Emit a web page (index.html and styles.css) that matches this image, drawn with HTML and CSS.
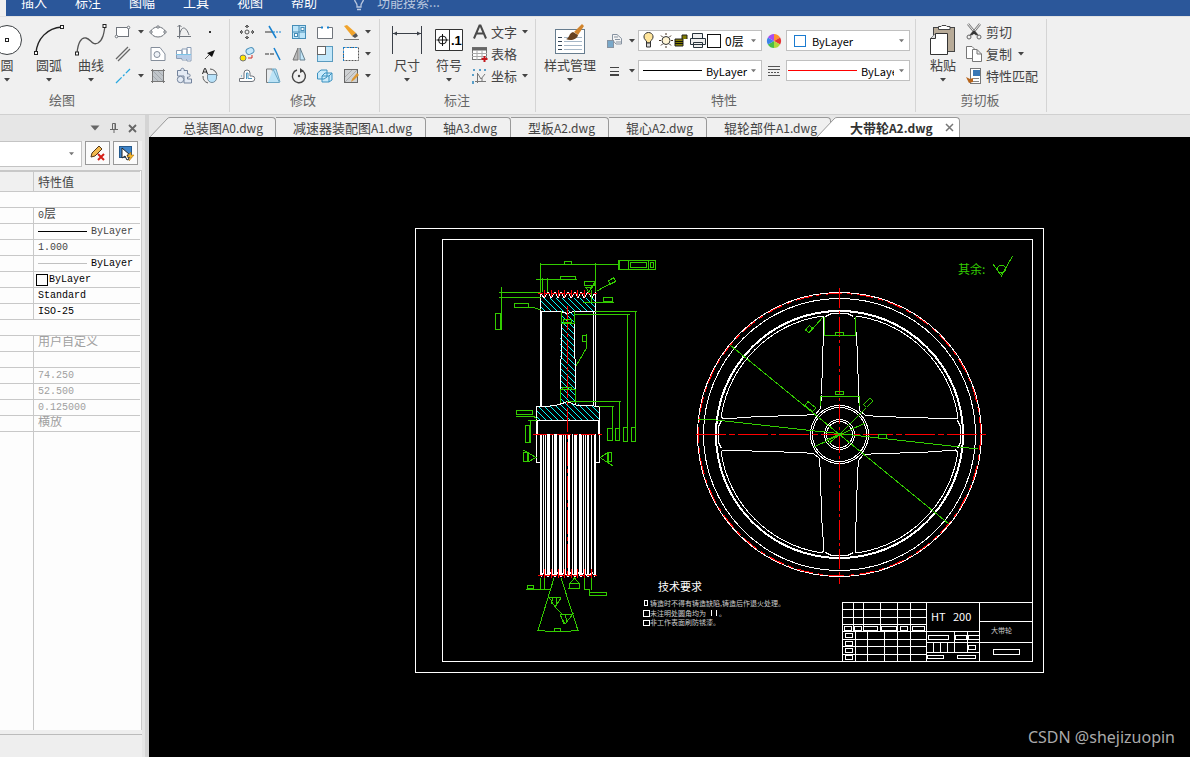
FILE: index.html
```html
<!DOCTYPE html>
<html lang="zh-CN">
<head>
<meta charset="utf-8">
<title>大带轮A2.dwg</title>
<link rel="stylesheet" href="styles.css">
</head>
<body>
<svg class="defs" aria-hidden="true">
  <symbol id="caret" viewBox="0 0 6 4"><path d="M0 0H6L3 3.5Z" fill="currentColor"/></symbol>
</svg>
<div class="app">
  <nav class="menubar">
    <a href="#">插入</a><a href="#">标注</a><a href="#">图幅</a><a href="#">工具</a><a href="#">视图</a><a href="#">帮助</a>
    <label class="search">
      <svg width="12" height="18" viewBox="0 0 12 18" fill="none" stroke="#b9c7df" stroke-width="1.3"><path d="M4 14V12C4 10 1.500 9 1.500 6A4.500 4.500 0 0 1 10.500 6C10.500 9 8 10 8 12V14ZM4 16.500H8"/></svg>
      <input type="text" placeholder="功能搜索..." aria-label="功能搜索">
    </label>
  </nav>

  <header class="ribbon">
    <section class="group group-draw">
      <div class="tools">
        <button class="big"><svg width="32" height="32"><circle cx="16" cy="16" r="14.500" fill="#fff" stroke="#3c4043"/><rect x="14.500" y="14.500" width="3" height="3" fill="#fff" stroke="#222"/></svg><span>圆</span><svg class="caret"><use href="#caret"/></svg></button>
        <button class="big"><svg width="32" height="32" fill="none" stroke="#222"><path d="M3 29C4 15 14 4 29 3" stroke-width="1.400"/><g fill="#fff"><rect x="1.500" y="27.500" width="3" height="3"/><rect x="27.500" y="1.500" width="3" height="3"/></g></svg><span>圆弧</span><svg class="caret"><use href="#caret"/></svg></button>
        <button class="big"><svg width="32" height="32" fill="none" stroke="#555"><path d="M2 29C3 19 6 13 11 14C16 15 17 22 23 19C28 16 29 9 30 2" stroke-width="1.300"/><g fill="#fff" stroke="#222"><rect x="0.500" y="28" width="3" height="3"/><rect x="28" y="0.500" width="3" height="3"/></g></svg><span>曲线</span><svg class="caret"><use href="#caret"/></svg></button>
        <div class="grid grid-draw">
          <button aria-label="矩形"><svg width="18" height="18" fill="#fff" stroke="#70757c"><rect x="2.500" y="4.500" width="12" height="9"/><circle cx="2.500" cy="13.500" r="1.300"/><circle cx="14.500" cy="4.500" r="1.300"/></svg></button>
          <button aria-label="矩形选项"><svg class="caret"><use href="#caret"/></svg></button>
          <button aria-label="椭圆"><svg width="18" height="18" fill="#fff" stroke="#70757c"><ellipse cx="9" cy="9" rx="7" ry="5"/><circle cx="9" cy="4" r="1.200"/><circle cx="2" cy="9" r="1.200"/><circle cx="16" cy="9" r="1.200"/></svg></button>
          <button aria-label="公式曲线"><svg width="18" height="18" fill="none" stroke="#70757c"><path d="M4.500 2V15.500M2 13.500H16M4.500 13C6 2 11 3 14 12M2.500 4L4.500 2L6.500 4"/></svg></button>
          <button aria-label="点"><svg width="18" height="18"><rect x="8" y="8" width="2" height="2" fill="#333"/></svg></button>
          <button aria-label="平行线"><svg width="18" height="18" stroke="#686868" stroke-width="1.300"><path d="M2 14L14 2M4 16L16 4"/></svg></button>
          <span></span>
          <button aria-label="孔"><svg width="18" height="18" fill="#fff" stroke="#858e9b"><path d="M2 2.500H11L16 9V15.500H2Z"/><circle cx="8" cy="9.500" r="3" fill="#eef2f7"/></svg></button>
          <button aria-label="轴"><svg width="18" height="18" fill="#fff" stroke="#8b9db5"><path d="M1.500 5.500H7V13.500H1.500ZM7 4H12V15H7ZM12 2.500H16V16H12Z"/><path d="M2 10H16V15H12V14H7V13H2Z" fill="#b7cde8" stroke="none"/><path d="M1 9.500H16" stroke="#7cc3e6"/></svg></button>
          <button aria-label="箭头"><svg width="18" height="18"><path d="M4 14L10 8" stroke="#555"/><path d="M14 5L6 8L11 12Z" fill="#111"/></svg></button>
          <button aria-label="中心线"><svg width="18" height="18"><path d="M2 16L16 2" stroke="#28a8e0" stroke-width="1.300" stroke-dasharray="8 2 2 2"/></svg></button>
          <button aria-label="中心线选项"><svg class="caret"><use href="#caret"/></svg></button>
          <button aria-label="填充"><svg width="18" height="18" fill="none" stroke="#777"><rect x="4" y="4" width="10" height="10" fill="#c0c5ca" stroke="none"/><path d="M3.500 2V16M14.500 2V16M2 3.500H16M2 14.500H16"/><path d="M4 9L9 14M4 4L14 14M9 4L14 9" stroke="#a4a9ae"/></svg></button>
          <button aria-label="零件"><svg width="18" height="18" fill="#e3eaf4" stroke="#73839c"><path d="M2.500 3.500H6C5 0.500 10 0.500 9 3.500H12.500V7C16 6 16 11 12.500 10V12H16.500V16H9V9H2.500Z"/><circle cx="5.500" cy="12.500" r="3.200"/></svg></button>
          <button aria-label="局部放大"><svg width="18" height="18"><path d="M9 2A7 7 0 0 1 16 9M2 9A7 7 0 0 0 7 16" stroke="#555" fill="none"/><path d="M6.500 7.500H15.500V11A4.500 4.500 0 0 1 6.500 11Z" fill="#b8e2fa" stroke="#758b9b"/><path d="M1.500 7L3.500 1.500H4.500L6.500 7M2.500 5H6" fill="none" stroke="#222"/></svg></button>
        </div>
      </div>
      <h2>绘图</h2>
    </section>

    <section class="group group-edit">
      <div class="tools">
        <div class="grid grid-edit">
          <button aria-label="移动"><svg width="18" height="18" stroke="#555" fill="none"><circle cx="9" cy="9" r="2"/><path d="M9 2V5M9 13V16M2 9H5M13 9H16" stroke-width="1.600"/><path d="M7 4L9 2L11 4M7 14L9 16L11 14M4 7L2 9L4 11M14 7L16 9L14 11"/></svg></button>
          <button aria-label="裁剪"><svg width="18" height="18" fill="none"><path d="M1 9H9" stroke="#333"/><path d="M9 9H17" stroke="#1681cf" stroke-dasharray="2 1"/><path d="M5 3L12 15" stroke="#1681cf" stroke-width="1.500"/></svg></button>
          <button aria-label="阵列"><svg width="18" height="18" fill="#fff" stroke="#468db7"><rect x="2.500" y="2.500" width="13" height="13" fill="#bde5f9"/><path d="M9 3V16M3 9H16"/><rect x="4.500" y="10.500" width="3" height="3"/><rect x="11" y="4.500" width="3" height="3"/></svg></button>
          <button aria-label="打断"><svg width="18" height="18" fill="#fff" stroke="#70757c"><path d="M5 4.500H1.500V15.500H16.500V4.500H13"/><path d="M5 4.500H7M11 4.500H13" stroke="#1681cf" stroke-width="2"/></svg></button>
          <button aria-label="删除"><svg width="18" height="18"><path d="M2 3L5 2L14 10L10 13Z" fill="#f0a32b"/><path d="M10 13L14 10L16 13L13 15Z" fill="#555"/><path d="M2 16.500H17" stroke="#777"/></svg></button>
          <button aria-label="删除选项"><svg class="caret"><use href="#caret"/></svg></button>
          <button aria-label="平移复制"><svg width="18" height="18"><circle cx="5" cy="13" r="3" fill="#ffe500" stroke="#777"/><rect x="8" y="3" width="8" height="6" rx="3" fill="#c6e8fa" stroke="#4e91ba" transform="rotate(-25 12 6)"/><path d="M10 13H14V10" stroke="#d02c22" fill="none"/></svg></button>
          <button aria-label="延伸"><svg width="18" height="18"><path d="M1 9H10" stroke="#333" stroke-dasharray="4 1"/><path d="M10 3L16 15" stroke="#1681cf" stroke-width="1.500"/></svg></button>
          <button aria-label="镜像"><svg width="18" height="18"><path d="M8 3V15H3Z" fill="#bbb" stroke="#777"/><path d="M10 3V15H15Z" fill="#c3e7fa" stroke="#667f8d"/></svg></button>
          <button aria-label="缩放"><svg width="18" height="18"><rect x="1.500" y="1.500" width="15" height="15" fill="#c3e7fa" stroke="#5a9bbf"/><rect x="1.500" y="1.500" width="8" height="8" fill="#fff" stroke="#666"/></svg></button>
          <button aria-label="拉伸"><svg width="18" height="18"><rect x="1.500" y="2.500" width="15" height="13" fill="#fff" stroke="#555" stroke-dasharray="2 1"/><path d="M1.500 2V16M1 2.500H17" stroke="#1681cf" stroke-dasharray="2 2"/></svg></button>
          <button aria-label="拉伸选项"><svg class="caret"><use href="#caret"/></svg></button>
          <button aria-label="等距"><svg width="18" height="18" fill="none" stroke="#70757c"><path d="M1.500 11.500H6V6A3 3 0 0 1 12 6V9H14A2.500 2.500 0 0 1 14 14.500H1.500Z" fill="#fff"/><path d="M3 9H4M8.500 12V6H10V11.500H14" stroke="#4d95bd"/></svg></button>
          <button aria-label="倒角"><svg width="18" height="18"><path d="M2.500 2V15.500H11L8 2Z" fill="#e7ecef" stroke="#777"/><path d="M9 2L15.500 15.500H4M8 2H12L16 15" fill="#bce3f6" stroke="#6ba6c4"/></svg></button>
          <button aria-label="旋转"><svg width="18" height="18"><path d="M7 3A6.500 6.500 0 1 0 12 3.500" fill="none" stroke="#444" stroke-width="1.400"/><path d="M10 1L14 4L10 6Z" fill="#444"/><circle cx="9" cy="9" r="1.200" fill="#444"/></svg></button>
          <button aria-label="分解"><svg width="18" height="18" fill="#c8eafb" stroke="#3b91bf"><path d="M1.500 6L5 3H11V10L8 12H1.500ZM6 9L9 6H16V13L13 15H6ZM6 9H13V15M13 9L16 6"/></svg></button>
          <button aria-label="块编辑"><svg width="18" height="18"><rect x="2.500" y="2.500" width="13" height="13" fill="#cfd1d3" stroke="#666"/><path d="M3 10L10 3M3 15L15 3" stroke="#aaa"/><path d="M9 15L10 12L15 6L17 8L12 13Z" fill="#dc9733"/></svg></button>
          <button aria-label="块选项"><svg class="caret"><use href="#caret"/></svg></button>
        </div>
      </div>
      <h2>修改</h2>
    </section>

    <section class="group group-note">
      <div class="tools">
        <button class="big"><svg width="32" height="32" stroke="#3b4048" fill="none"><path d="M1.500 2V30M30.500 2V30M2 9.500H30"/><path d="M2 9.500L6 7.500V11.500ZM30 9.500L26 7.500V11.500Z" fill="#3b4048" stroke="none"/></svg><span>尺寸</span><svg class="caret"><use href="#caret"/></svg></button>
        <button class="big"><svg width="32" height="32"><path d="M2.500 5.500H29.500V26.500H2.500ZM16.500 5V27" fill="#fff" stroke="#333"/><circle cx="9.500" cy="16" r="4" fill="none" stroke="#111"/><path d="M9.500 10V22M3.500 16H15.500" stroke="#111"/><text x="18" y="21" font-family="Liberation Sans" font-size="13" font-weight="700">.1</text></svg><span>符号</span><svg class="caret"><use href="#caret"/></svg></button>
        <div class="rows">
          <button class="row"><svg width="20" height="18"><path d="M4 15.500L9.500 2.500H10.500L16 15.500M6 10.500H14" fill="none" stroke="#4a4a4a" stroke-width="2"/></svg>文字<svg class="caret"><use href="#caret"/></svg></button>
          <button class="row"><svg width="20" height="18"><rect x="2.500" y="2.500" width="14" height="12" fill="#fff" stroke="#777"/><path d="M2 4H17" stroke="#666" stroke-width="3"/><path d="M2 8.500H17M2 11.500H17M7 5V15M12 5V15" stroke="#aaa"/><path d="M14.500 11V17M11.500 14H17.500" stroke="#c4161c" stroke-width="2"/></svg>表格</button>
          <button class="row"><svg width="20" height="18" fill="none"><path d="M7.500 6V16M5 14.500H16M8 7L11 12L15 7M12 14V11" stroke="#777"/><path d="M4 2V4M10 2V4M15 2V4M3 7V9M3 14V17" stroke="#5a9fc9" stroke-width="2"/></svg>坐标<svg class="caret"><use href="#caret"/></svg></button>
        </div>
      </div>
      <h2>标注</h2>
    </section>

    <section class="group group-props">
      <div class="tools">
        <button class="big wide"><svg width="32" height="32"><rect x="1.500" y="5.500" width="29" height="24" fill="#fff" stroke="#667c8e"/><path d="M4 13.500H8M4 17.500H8M4 21.500H8M4 25.500H8" stroke="#345"/><path d="M10 13.500H28M10 17.500H28M10 21.500H28M10 25.500H28" stroke="#a7b8c8"/><path d="M20 8L28 0L30 2L24 11Z" fill="#d1842c"/><path d="M12 15C16 14 14 10 19 8L24 11C23 16 16 17 12 15Z" fill="#67411f"/></svg><span>样式管理</span><svg class="caret"><use href="#caret"/></svg></button>
        <div class="props">
          <button class="pair" aria-label="图层"><svg width="20" height="20"><g fill="#f4f4f4" stroke="#8793a1"><path d="M7.500 3.500H12L16.500 7.500V13H11L7.500 9ZM9 6H13M10 8.500H15M11 11H16"/><rect x="2.500" y="9.500" width="6" height="7" fill="#79a8c9"/></g></svg><svg class="caret"><use href="#caret"/></svg></button>
          <div class="combo">
            <svg width="88" height="19" class="layer-icons"><path d="M6.500 12V10C2 7 4 1.500 8.500 1.500S15 7 10.500 10V12Z" fill="#ffe59b" stroke="#333"/><path d="M6.500 12H10.500V16H6.500Z" fill="#ddd" stroke="#333"/><circle cx="26" cy="9.500" r="4" fill="#fff5d5" stroke="#333"/><path d="M26 2V4M26 15V17M19 9.500H21M31 9.500H33M21 4.500L22.500 6M31 4.500L29.500 6M21 14.500L22.500 13M31 14.500L29.500 13" stroke="#443020"/><path d="M35 8H43V15H35ZM42 8V4H47V8" fill="#827c00" stroke="#222"/><path d="M35 10.500H43M35 12.500H43" stroke="#111"/><path d="M52.500 7V2.500H62.500V7M50.500 7.500H65.500V13.500H50.500ZM53.500 11.500H62.500V16.500H53.500Z" fill="#eee" stroke="#26323b"/><rect x="67.500" y="3.500" width="13" height="13" fill="#fff" stroke="#111"/></svg>
            <select aria-label="图层" class="layer-select"><option>0层</option></select><svg class="caret"><use href="#caret"/></svg>
          </div>
          <span class="mid"><svg width="16" height="16"><path d="M8 8L8 1A7 7 0 0 1 14.100 4.500Z" fill="#ff912e"/><path d="M8 8L14.100 4.500A7 7 0 0 1 14.100 11.500Z" fill="#e63333"/><path d="M8 8L14.100 11.500A7 7 0 0 1 8 15Z" fill="#b1d83b"/><path d="M8 8V15A7 7 0 0 1 1.900 11.500Z" fill="#4abd48"/><path d="M8 8L1.900 11.500A7 7 0 0 1 1.900 4.500Z" fill="#3b83eb"/><path d="M8 8L1.900 4.500A7 7 0 0 1 8 1Z" fill="#a84cf0"/></svg></span>
          <div class="combo"><span class="swatch"></span><select aria-label="颜色"><option>ByLayer</option></select><svg class="caret"><use href="#caret"/></svg></div>

          <button class="pair" aria-label="线宽"><svg width="20" height="20" stroke="#444"><path d="M5 6.500H14M5 10.500H14" /><path d="M5 14H14" stroke-width="2"/></svg><svg class="caret"><use href="#caret"/></svg></button>
          <div class="combo"><span class="sample"></span><select aria-label="线宽" class="narrow"><option>ByLayer</option></select><svg class="caret"><use href="#caret"/></svg></div>
          <span class="mid"><svg width="16" height="14" stroke="#555"><path d="M2 2.500H14M2 5.500H14M2 11.500H14"/><path d="M2 8.500H14" stroke-dasharray="2 1"/></svg></span>
          <div class="combo"><span class="sample red-line"></span><select aria-label="线型" class="clipped"><option>ByLayer</option></select><svg class="caret"><use href="#caret"/></svg></div>
        </div>
      </div>
      <h2>特性</h2>
    </section>

    <section class="group group-clip">
      <div class="tools">
        <button class="big"><svg width="32" height="32"><rect x="6.500" y="3.500" width="21" height="24" fill="#b8ab98" stroke="#444"/><path d="M11.500 5.500V2.500H14L15 1.500H19L20 2.500H23V5.500Z" fill="#fff" stroke="#444"/><path d="M8.500 9.500H20.500V30.500H3.500V14.500Z" fill="#fff" stroke="#333"/><path d="M8.500 9.500V14.500H3.500" fill="#ddd" stroke="#333"/></svg><span>粘贴</span><svg class="caret"><use href="#caret"/></svg></button>
        <div class="rows">
          <button class="row"><svg width="20" height="18" fill="none"><path d="M4 1L13 12M16 1L7 12" stroke="#777" stroke-width="2.500"/><path d="M4 1L13 12M16 1L7 12" stroke="#eee"/><path d="M10 7L5 13L10 11L15 13Z" fill="#333"/><circle cx="5" cy="14" r="2" stroke="#666"/><circle cx="15" cy="14" r="2" stroke="#666"/></svg>剪切</button>
          <button class="row"><svg width="20" height="18" fill="#fff" stroke="#777"><path d="M2.500 1.500H8L11.500 5V13.500H2.500Z"/><path d="M8.500 4.500H13L17.500 9V16.500H8.500ZM13 4.500V9H17.500"/></svg>复制<svg class="caret"><use href="#caret"/></svg></button>
          <button class="row"><svg width="20" height="18"><rect x="6.500" y="1.500" width="10" height="15" fill="#fff" stroke="#777"/><rect x="9" y="3" width="7" height="6" fill="#3978b6"/><path d="M9 11.500H15M9 14.500H15" stroke="#888"/><path d="M2 10L6 12L9 11V15L5 16Z" fill="#b8651c"/></svg>特性匹配</button>
        </div>
      </div>
      <h2>剪切板</h2>
    </section>
  </header>

  <div class="work">
    <aside class="panel">
      <div class="panel-head">
        <button aria-label="菜单"><svg width="10" height="6"><path d="M0.500 0.500H9.500L5 5.500Z" fill="#666"/></svg></button>
        <button aria-label="固定"><svg width="8" height="10" fill="none" stroke="#666"><path d="M2.500 6V0.500H5.500V6M0 6.500H8M4 6.500V10M5 1V6"/></svg></button>
        <button aria-label="关闭"><svg width="9" height="9"><path d="M1 1L8 8M8 1L1 8" stroke="#666" stroke-width="1.800"/></svg></button>
      </div>
      <div class="panel-tools">
        <div class="pick"><select aria-label="选择对象"><option></option></select><svg class="caret"><use href="#caret"/></svg></div>
        <button aria-label="清除选择"><svg width="18" height="18"><path d="M2 13L3 9L10 2L13 5L6 12Z" fill="#f3b94d" stroke="#54371a"/><path d="M9 10L15 16M15 10L9 16" stroke="#d41f17" stroke-width="2"/></svg></button>
        <button aria-label="快速选择"><svg width="18" height="18"><rect x="2.500" y="2.500" width="12" height="11" fill="#3e84c9" stroke="#255a8d"/><path d="M5 4V14L8 12L10 16L12 15L10 11H13Z" fill="#fff" stroke="#222"/><path d="M14 8L10 13H13L12 17L17 11H14Z" fill="#f4b72e" stroke="#a96b00" stroke-width=".5"/></svg></button>
      </div>
      <div class="sheet">
        <table>
          <thead><tr><th></th><th scope="col">特性值</th></tr></thead>
          <tbody>
            <tr><td colspan="2"></td></tr>
            <tr><td></td><td>0<span class="cjk">层</span></td></tr>
            <tr><td></td><td><span class="cell-line"><i></i>ByLayer</span></td></tr>
            <tr><td></td><td>1.000</td></tr>
            <tr class="dark"><td></td><td><span class="cell-line light"><i></i>ByLayer</span></td></tr>
            <tr class="dark"><td></td><td><span class="cell-box"><i></i>ByLayer</span></td></tr>
            <tr class="dark"><td></td><td>Standard</td></tr>
            <tr class="dark"><td></td><td>ISO-25</td></tr>
            <tr><td colspan="2"></td></tr>
            <tr class="dim"><td></td><td><span class="cjk">用户自定义</span></td></tr>
            <tr><td></td><td></td></tr>
            <tr class="dim"><td></td><td>74.250</td></tr>
            <tr class="dim"><td></td><td>52.500</td></tr>
            <tr class="dim"><td></td><td>0.125000</td></tr>
            <tr class="dim"><td></td><td><span class="cjk">横放</span></td></tr>
          </tbody>
        </table>
        <div class="sheet-rest"></div>
      </div>
      <div class="panel-foot"></div>
    </aside>

    <main class="doc">
      <div class="tabs">
        <svg class="edge" width="21" height="21"><path d="M0 21L18 2Q19 0.500 21 0.500V21Z" fill="#f0f0f0"/><path d="M0 21L18 2Q19 0.500 21 0.500" fill="none" stroke="#999"/></svg>
        <button class="tab first">总装图<span>A0.dwg</span></button>
        <button class="tab">减速器装配图<span>A1.dwg</span></button>
        <button class="tab">轴<span>A3.dwg</span></button>
        <button class="tab">型板<span>A2.dwg</span></button>
        <button class="tab">辊心<span>A2.dwg</span></button>
        <button class="tab">辊轮部件<span>A1.dwg</span></button>
        <svg class="edge over" width="21" height="21"><path d="M0 21L18 2Q19 0.500 21 0.500V21Z" fill="#fff"/><path d="M0 21L18 2Q19 0.500 21 0.500" fill="none" stroke="#999"/></svg>
        <div class="tab active"><strong>大带轮<span>A2.dwg</span></strong><button aria-label="关闭标签"><svg width="9" height="9"><path d="M1 1L8 8M8 1L1 8" stroke="#777" stroke-width="1.500"/></svg></button></div>
      </div>
      <div class="canvas">
        <svg class="drawing" viewBox="149 137 1041 620" role="img" aria-label="大带轮零件图">
          <defs>
            <pattern id="hatch" width="6" height="6" patternUnits="userSpaceOnUse"><path d="M-1 -1L7 7M-1 5L1 7M5 -1L7 1" class="cyan"/></pattern>
            <path id="window" d="M-16 -118V-104L-18 -40L-19 -26L-24 -20L-40 -19L-82 -18L-116 -15.500Q-118 -16 -118 -20A119.500 119.500 0 0 1 -20 -118H-16"/>
            <path id="cap" d="M-14 -118L-8 -121H8L14 -118"/>
          </defs>
          <g class="white">
            <path d="M415.500 228.500H1043.500V672.500H415.500ZM442.500 239.500H1032.500V661.500H442.500Z"/>
          </g>

          <g class="wheel" transform="translate(839.500 434.500)">
            <g class="white">
              <circle r="142"/><circle r="136"/><circle r="123.500" class="bold"/>
              <use href="#window"/><use href="#window" transform="rotate(90)"/><use href="#window" transform="rotate(180)"/><use href="#window" transform="rotate(270)"/>
              <use href="#cap"/><use href="#cap" transform="rotate(90)"/><use href="#cap" transform="rotate(180)"/><use href="#cap" transform="rotate(270)"/>
              <circle r="29"/><circle r="27"/><circle r="15"/><circle r="13"/>
            </g>
            <g class="red"><circle r="141" stroke-dasharray="16 5 5 5"/><path d="M-144 0H147" stroke-dasharray="30 3 6 3"/><path d="M0 -147V149" stroke-dasharray="20 3 3 3"/></g>
          </g>
          <g class="green">
            <path d="M730 345L949 524M698 420L707 419L978 449M814 447L865 423M840 434L866 408M826 440L840 434L828 444"/>
            <path d="M823 317L809 333M824.500 317V336M824 335.500H856M855.500 317V336M820.500 406V396.500H859.500V406"/>
            <path d="M835.500 332.500H843.500V335.500H835.500ZM835.500 391.500H843.500V394.500H835.500ZM878.500 434.500H886.500V438.500H878.500Z"/>
            <rect x="864" y="401" width="9" height="4" transform="rotate(-45 868 403)"/>
            <rect x="805" y="404" width="10" height="5" transform="rotate(39 810 407)"/>
            <rect x="806" y="327" width="6" height="4" transform="rotate(-50 809 329)"/>
          </g>

          <path fill="url(#hatch)" d="M541 298H595V311H575V358L576 404L590 406H599V420H537V406H552L560 404V358L561 311H541Z"/>
          <g class="white">
            <path d="M540.500 311.500V292.500L544 298L548 292L551 298L555 292L558 298L561 292L564 298L568 292L571 298L575 292L578 298L581 292L584 298L588 292L592 298L595.500 292V311.500"/>
            <path d="M540.500 311.500H561L567 313.500L574 311.500H595.500M561.500 311V358L560.500 360V404M574.500 311V358L575.500 360V404"/>
            <path d="M593.500 311V406M595.500 311V406"/><path d="M541 311V406" class="bold"/>
            <path d="M536.500 462.500V406.500H547L560 404.500L567 401.500L577 405.500H588L599.500 406.500V462.500H596M536.500 462.500H540M536.500 420.500H599.500M537.500 420V434M598.500 420V434"/>
          </g>
          <g class="stripes">
            <path d="M540 434H542V576H540ZM543 434H544V573H543ZM545 434H546V573H545ZM547 434H550V576H547ZM552 434H553V573H552ZM554 434H557V576H554ZM559 434H562V576H559ZM563 434H564V573H563ZM565 434H566V573H565ZM568 434H570V576H568ZM572 434H573V573H572ZM574 434H577V576H574ZM579 434H582V576H579ZM583 434H584V573H583ZM585 434H586V573H585ZM587 434H589V576H587ZM591 434H592V573H591ZM594 434H596V576H594Z"/>
          </g>
          <path class="white" d="M541 577L544 572L548 577L551 572L555 577L558 572L561 577L564 572L568 577L571 572L575 577L578 572L581 577L584 572L588 577L592 572L595 577"/>
          <g class="red">
            <path d="M538 293.500H597M538 575.500H597" stroke-dasharray="5 2"/>
            <path d="M544.500 290V297M551.500 290V297M558.500 290V297M564.500 290V297M571.500 290V297M577.500 290V297M584.500 290V297M591.500 290V297M544.500 569V578M551.500 569V578M558.500 569V578M564.500 569V578M571.500 569V578M577.500 569V578M584.500 569V578M591.500 569V578"/>
            <path d="M533 434.500H604" stroke-dasharray="14 3 4 3"/><path d="M567.500 306V578" stroke-dasharray="24 3 4 3"/>
          </g>
          <g class="green">
            <path d="M540.500 292V263M595.500 292V263M540 264.500H618M564.500 264V261.500H571.500V264"/>
            <path d="M618.500 260.500H655.500V269.500H618.500ZM619.500 260V270M628.500 260V270M648.500 260V270M630.500 262.500H646.500V267.500H630.500ZM650.500 262.500H653.500V267.500H650.500Z"/>
            <path d="M536 279.500H577M560.500 279V276.500H575.500V279M542.500 278V292M547.500 278V292"/>
            <path d="M584.500 281.500H594.500V285.500H584.500ZM585 287.500H592L588.500 292L586 287M590 290L594 283M591.500 290V302M583 302.500H614M603.500 297.500H612.500V301.500H603.500Z"/>
            <path d="M597 291L606 286L615 282"/><rect x="609" y="279" width="6" height="4" transform="rotate(-35 612 281)"/>
            <path d="M499 292.500H541M499 297.500H541M501.500 287V330M495.500 313.500H500.500V329.500H495.500ZM514.500 303.500H528.500V307.500H514.500ZM528 307.500H534L541 310"/>
            <path d="M595 311.500H637M574 314.500H630M627.500 314V441M635.500 311V441M623.500 427.500H627.500V441.500H623.500ZM631.500 427.500H635.500V441.500H631.500Z"/>
            <path d="M567 401.500H621M599 406.500H614M612.500 406V441M619.500 401V441M607.500 428.500H612.500V440.500H607.500ZM615.500 428.500H619.500V440.500H615.500Z"/>
            <path d="M561.500 311V323.500H574.500V311M563.500 319.500H571.500V322.500H563.500ZM560.500 403V389.500H575.500V403M562.500 387.500H571.500V389.500H562.500Z"/>
            <path d="M582.500 335.500H586.500V341.500H582.500ZM586.500 334V348L576 366"/>
            <path d="M516.500 410.500H532.500V414.500H516.500ZM516 416.500H534L537 419M528 420.500H537M530.500 420V443M525.500 425.500H529.500V442.500H525.500Z"/>
            <path d="M523 450L536 457.500L528 462M523.500 452.500H528.500V461.500H523.500ZM527.500 453V462M600 457.500L608 452.500M600 457.500L613 466M608.500 452.500H611.500V461.500H608.500ZM607.500 453V462"/>
            <path d="M540.500 578V590M544.500 578V590M526 589.500H550M527.500 585.500H533.500V588.500H527.500Z"/>
            <path d="M554 578L538 630.500L558 632L578 630.500L561 578M554.500 628.500H560.500V631.500H554.500Z"/>
            <path d="M549 597L561 598L555 607ZM553 597L551 604M557 597L556 606M555 607L563 615M560 615L573 614L565 624ZM565 614L567 622M560 614L564 624"/>
            <path d="M570 583.500L574.500 578L579 583.500M569.500 583.500H579.500V588.500H569.500ZM568 588.500H570M584.500 578V589.500H589V593M591.500 578V590M589.500 592.500H606.500V595.500H589.500Z"/>
            <path d="M993 264L1001.500 276L1012.500 256"/><circle cx="1001.500" cy="269" r="4"/>
          </g>

          <g class="white">
            <path d="M842.500 661V602.500H1032M842.500 609.500H926M842.500 617.500H926M842.500 624.500H926M842.500 631.500H979M842.500 639.500H926M842.500 646.500H926M842.500 654.500H926"/>
            <path d="M853.500 602V631M863.500 602V631M880.500 602V631M897.500 602V661M910.500 602V661M926.500 602V661M855.500 631V661M867.500 631V661M884.500 631V661M979.500 602V661"/>
            <path d="M926 642.500H1032M926 652.500H979M979 621.500H1032M954.500 631V652M967.500 631V652M933.500 642V652M940.500 642V652M947.500 642V652"/>
            <path d="M844.500 626.500h7v4h-7zM854.500 626.500h7v4h-7zM863.500 626.500h14v4h-14zM881.500 626.500h15v4h-15zM900.500 626.500h7v4h-7zM912.500 626.500h12v4h-12zM845.500 633.500h7v4h-7zM845.500 641.500h7v4h-7zM845.500 648.500h7v4h-7zM845.500 655.500h7v4h-7z"/>
            <path d="M928.500 635.500h20v4h-20zM955.500 635.500h11v4h-11zM968.500 635.500h11v4h-11zM968.500 645.500h7v4h-7zM927.500 655.500h16v3h-16zM957.500 655.500h18v3h-18zM993.500 649.500h26v5h-26z"/>
            <path d="M644.500 600.500h3v5h-3zM643.500 610.500h6v6h-6zM643.500 620.500h6v5h-6zM711.500 610V616M716.500 610V616"/>
          </g>
          <text x="958" y="274" class="t-rest">其余:</text>
          <text x="658" y="591" class="t-title">技术要求</text>
          <g class="t-note"><text x="650" y="606">铸造时不得有铸造缺陷,铸造后作退火处理。</text><text x="650" y="616">未注明处圆角均为</text><text x="719" y="616">。</text><text x="650" y="625">非工作表面刷防锈漆。</text><text x="991" y="633">大带轮</text></g>
          <g class="t-mat"><text x="931" y="621">HT</text><text x="953" y="621">200</text></g>
        </svg>
        <p class="watermark">CSDN @shejizuopin</p>
      </div>
    </main>
  </div>
</div>
</body>
</html>
```
FILE: styles.css
```css
* { box-sizing: border-box; }
body {
  margin: 0;
  background: #f0f0f0;
  color: #444;
  font: 13px/16px "Noto Sans CJK SC", sans-serif;
}
button, select, input { font: inherit; color: inherit; }
button { padding: 0; border: 0; background: none; }
svg { display: block; flex: none; }
.defs { position: absolute; width: 0; height: 0; }
.caret { width: 6px; height: 4px; color: #444; }
.app { display: flex; flex-direction: column; min-height: 100vh; }

/* Menu */
.menubar {
  display: flex;
  align-items: flex-end;
  gap: 28px;
  height: 16px;
  margin-left: 6px;
  padding: 0 15px 4px;
  overflow: hidden;
  background: #2b579a;
}
.menubar a { color: #fff; line-height: 20px; text-decoration: none; white-space: nowrap; }
.search { display: flex; align-items: center; gap: 12px; margin-left: 8px; height: 20px; }
.search input { width: 120px; padding: 0; border: 0; background: none; line-height: 20px; }
.search input::placeholder { color: #b9c7df; opacity: 1; }

/* Ribbon */
.ribbon {
  display: flex;
  border-top: 1px solid #e2e2e2;
  border-bottom: 1px solid #d0d0d0;
  overflow: hidden;
}
.group { flex: none; margin: 2px 0; padding: 2px 0 4px; border-right: 1px solid #d4d4d4; }
.group h2 { margin: 5px 0 0; color: #666; font-size: 13px; font-weight: 400; line-height: 16px; text-align: center; }
.tools { display: flex; height: 66px; }
.group-draw { padding-right: 9px; }
.group-draw .tools { margin-left: -14px; }
.group-draw h2 { padding-left: 49px; text-align: left; }
.group-edit { padding-right: 7px; padding-left: 4px; }
.group-note { padding-right: 7px; padding-left: 6px; }
.group-props { padding-right: 5px; padding-left: 2px; }
.group-clip { padding-right: 8px; padding-left: 6px; }
.big { display: flex; flex-direction: column; align-items: center; width: 42px; padding-top: 3px; white-space: nowrap; }
.big span { margin: 1px 0 5px; }
.big.wide { width: 64px; }
.grid { display: grid; grid-auto-rows: 22px; }
.grid > * { display: flex; align-items: center; justify-content: center; }
.grid-draw { grid-template-columns: 22px 14px 20px 32px 20px; }
.grid-edit { grid-template-columns: repeat(5, 26px) 8px; }
.rows { display: grid; grid-auto-rows: 22px; }
.row { display: flex; align-items: center; gap: 1px; white-space: nowrap; }
.row .caret { margin-left: 4px; }
.group-clip .row { gap: 2px; }
.props { display: grid; grid-template-columns: 36px 124px 24px 124px; grid-auto-rows: 21px; row-gap: 9px; padding-top: 9px; }
.pair { display: flex; align-items: center; gap: 4px; padding-left: 3px; }
.mid { display: flex; align-items: center; justify-content: center; }
.combo {
  display: flex;
  align-items: center;
  padding-right: 5px;
  overflow: hidden;
  border: 1px solid #c0c0c0;
  background: #fff;
  color: #000;
  font-size: 11px;
}
.combo .caret, .pick .caret { color: #777; width: 5px; height: 4px; }
.combo select { flex: 1; min-width: 0; padding: 0; border: 0; background: none; appearance: none; line-height: 18px; }
.layer-icons { width: 85px; margin-left: 1px; }
.combo .layer-select { font-size: 12px; }
.swatch { width: 12px; height: 12px; margin: 0 6px 0 7px; border: 1px solid #1b7bd0; }
.sample { flex: 1; margin: 0 4px; border-top: 1px solid #000; }
.combo .narrow { flex: none; width: 45px; }
.sample.red-line { margin-left: 1px; border-color: #f00; }
.combo .clipped { flex: none; width: 33px; margin-right: 5px; overflow: hidden; text-overflow: clip; }

/* Properties panel */
.work { display: flex; flex: 1; }
.panel { display: flex; flex: none; flex-direction: column; width: 149px; border-right: 4px solid #d4d4d4; background: #e6e6e6; }
.panel-head { display: flex; align-items: center; justify-content: flex-end; gap: 10px; height: 26px; padding-right: 8px; }
.panel-tools { display: flex; gap: 3px; height: 29px; margin-right: 3px; padding-right: 4px; background: #f0f0f0; }
.pick { display: flex; flex: 1; align-items: center; height: 26px; padding-right: 7px; border: 1px solid #c4c4c4; border-left: 0; background: #fff; }
.pick select { flex: 1; min-width: 0; border: 0; background: none; appearance: none; }
.panel-tools button { display: grid; place-items: center; width: 25px; height: 24px; border: 1px solid #999; background: #fbfbfb; }
.sheet { display: flex; flex: 1; flex-direction: column; margin-right: 3px; padding-right: 1px; border-top: 1px solid #c8c8c8; border-right: 1px solid #c8c8c8; background: #fdfdfd; }
table { width: 100%; border-collapse: separate; border-spacing: 0; table-layout: fixed; font: 10px/14px "Liberation Mono", "Noto Sans CJK SC", monospace; }
th, td { height: 16px; padding: 0 0 0 4px; border-bottom: 1px solid #c8c8c8; line-height: 14px; text-align: left; white-space: nowrap; overflow: hidden; }
th:first-child, td:first-child { width: 34px; border-right: 1px solid #c8c8c8; }
td[colspan] { border-right: 0; }
thead th { height: 21px; border-top: 1px solid #c8c8c8; background: #f0f0f0; font: 12px/16px "Noto Sans CJK SC", sans-serif; }
.cjk { font: 12px/10px "Noto Sans CJK SC", sans-serif; }
.dark { color: #000; }
.dim { color: #a0a0a0; }
.cell-line { display: flex; align-items: center; gap: 4px; }
.cell-line i { width: 49px; border-top: 1px solid #000; }
.cell-line.light i { border-color: #c0c0c0; }
.cell-box { display: flex; align-items: center; gap: 1px; margin-left: -2px; }
.cell-box i { width: 12px; height: 12px; border: 1px solid #000; }
.sheet-rest { flex: 1; width: 34px; border-right: 1px solid #c8c8c8; }
.panel-foot { height: 27px; margin-right: 3px; border-top: 4px solid #eee; background: linear-gradient(#bbb 1px, #eee 1px); }

/* Documents */
.doc { display: flex; flex: 1; flex-direction: column; min-width: 0; }
.tabs { display: flex; align-items: flex-end; height: 22px; background: #e6e6e6; }
.tab {
  height: 20px;
  padding: 0 13px 0 17px;
  border-top: 1px solid #999;
  border-right: 1px solid #999;
  border-radius: 0 4px 0 0;
  background: #f0f0f0;
  line-height: 17px;
  white-space: nowrap;
}
.tab span { font-size: 12px; }
.edge { height: 20px; }
.edge.over { z-index: 1; margin-left: -15px; }
.tab.first { padding: 0 12px 0 13px; }
.tab.active { display: flex; align-items: center; gap: 12px; padding: 0 5px 0 13px; background: #fff; color: #333; }
.canvas { position: relative; flex: 1; overflow: hidden; background: #000; }
.drawing { position: absolute; inset: 0; width: 100%; height: 100%; }
.drawing path, .drawing circle, .drawing rect { shape-rendering: crispEdges; }
.white, .red, .green, .cyan { fill: none; stroke-width: 1px; }
.white { stroke: #fff; }
.red { stroke: #f00; }
.green { stroke: #3c0; }
.cyan { stroke: #0ff; }
.bold { stroke-width: 2px; }
.stripes { fill: #fff; }
.drawing text { font-family: "Noto Sans CJK SC", sans-serif; }
.t-rest { fill: #3c0; font-size: 12px; }
.t-title { fill: #fff; font-size: 11px; }
.t-note { fill: #ccc; font-size: 7px; }
.t-mat { fill: #fff; font-size: 11px; }
.watermark { position: absolute; right: 15px; bottom: 9px; margin: 0; color: #aaa; font: 16px/22px "Noto Sans", sans-serif; }
```
